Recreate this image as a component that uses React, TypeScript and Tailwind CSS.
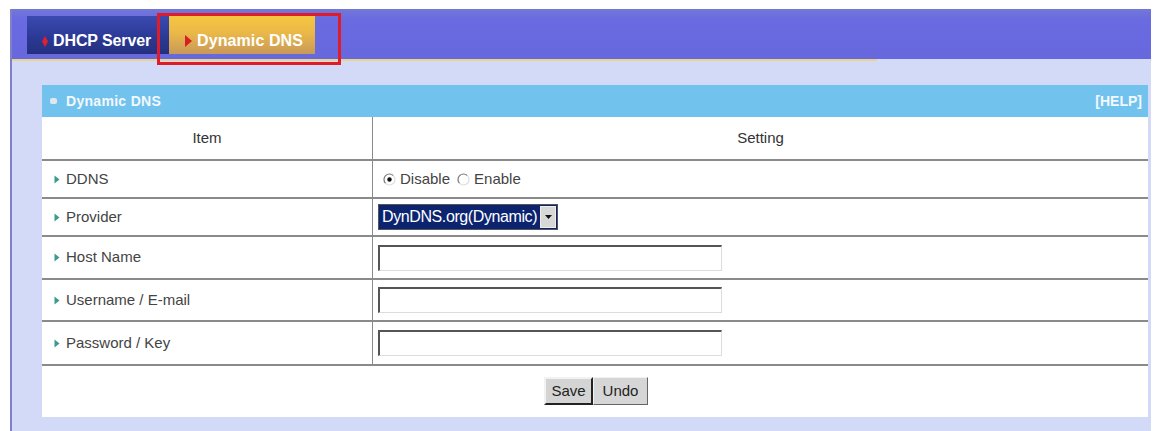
import React from "react"

const rows = ["DDNS", "Provider", "Host Name", "Username / E-mail", "Password / Key"]
const rowH = ["h-[38px]", "h-[38px]", "h-[43px]", "h-[42px]", "h-[44px]"]

function Bullet() {
  return (
    <svg width="6" height="9" viewBox="0 0 6 9" className="mr-[6px] shrink-0">
      <path d="M0.5 0.5 L5.5 4.5 L0.5 8.5 Z" fill="#3c9a8e" />
    </svg>
  )
}

function Radio({ checked }: { checked?: boolean }) {
  return (
    <svg width="13" height="13" viewBox="0 0 13 13" className="shrink-0">
      <circle cx="6.5" cy="6.5" r="5.5" fill="#fff" />
      <path d="M2.6 10.4 A5.5 5.5 0 0 1 10.4 2.6" stroke="#777" strokeWidth="1.2" fill="none" />
      <path d="M10.4 2.6 A5.5 5.5 0 0 1 2.6 10.4" stroke="#ddd" strokeWidth="1.2" fill="none" />
      {checked && <circle cx="6.5" cy="6.5" r="2.2" fill="#111" />}
    </svg>
  )
}

function TextBox() {
  return (
    <div className="w-[344px] h-[26px] bg-white border-t-2 border-l-2 border-b border-r border-t-[#555] border-l-[#555] border-b-[#ddd] border-r-[#ddd]" />
  )
}

export default function App() {
  return (
    <div className="w-[1153px] h-[431px] bg-white pt-[9px] pl-[10px] overflow-hidden font-['Liberation_Sans',Arial,sans-serif]">
      <div className="relative w-[1141px] h-[422px] border-l-2 border-[#7f80c8] bg-[#d3daf8] flex flex-col">
        {/* tab band */}
        <div className="h-[50px] bg-[linear-gradient(#7477d8,#6a6be0_20%,#6868de)] flex items-end pl-[15px] shrink-0">
          <div className="flex h-[38px] mb-[5px]">
            <div className="w-[142px] h-full bg-[linear-gradient(#3a4ab0,#2a3894_60%,#24307e)] flex items-center pl-[15px] pt-[12px] text-white font-bold text-[16px] tracking-[-0.1px]">
              <svg width="6" height="11" viewBox="0 0 6 11" className="mr-[5px]">
                <path d="M3 0 L6 5.5 L3 11 L0 5.5 Z" fill="#e0202a" />
              </svg>
              DHCP Server
            </div>
            <div className="w-[146px] h-full bg-[linear-gradient(#f7c640,#eab848_45%,#c8985a)] flex items-center pl-[16px] pt-[12px] text-white font-bold text-[16px] tracking-[0.1px]">
              <svg width="7" height="12" viewBox="0 0 7 12" className="mr-[5px]">
                <path d="M0 0 L7 6 L0 12 Z" fill="#d81e20" />
              </svg>
              Dynamic DNS
            </div>
          </div>
        </div>
        <div className="h-[2px] w-[865px] bg-[#e8d48a] shrink-0" />

        {/* red annotation box */}
        <div className="absolute left-[145px] top-[4px] w-[184px] h-[52px] border-[3px] border-[#e01c2a]" />

        {/* panel */}
        <div className="ml-[30px] mt-[24px] w-[1106px] h-[332px] bg-white flex flex-col">
          <div className="h-[32px] bg-[#72c2ee] flex items-center justify-between px-[8px] text-[#f2f8ff] text-[14px] font-bold shrink-0">
            <div className="flex items-center tracking-[0.3px]">
              <div className="w-[7px] h-[6px] rounded-[2px] bg-[#dfe8ee] mr-[9px]" />
              Dynamic DNS
            </div>
            <span className="mr-[-2px]">[HELP]</span>
          </div>

          <div className="grid grid-cols-[331px_1fr] text-[15px] text-[#444]">
            <div className="h-[44px] flex items-center justify-center border-r border-b-2 border-[#8a8a8a] text-[#333]">Item</div>
            <div className="h-[44px] flex items-center justify-center border-b-2 border-[#8a8a8a] text-[#333]">Setting</div>

            {rows.map((r, i) => (
              <React.Fragment key={r}>
                <div className={`flex items-center pl-[12px] border-r border-b-2 border-[#8a8a8a] ${rowH[i]}`}>
                  <Bullet />
                  {r}
                </div>
                <div className={`flex items-center pl-[5px] border-b-2 border-[#8a8a8a] ${rowH[i]}`}>
                  {i === 0 && (
                    <div className="flex items-center gap-[4px] pl-[5px]">
                      <Radio checked />
                      <span className="mr-[3px]">Disable</span>
                      <Radio />
                      <span>Enable</span>
                    </div>
                  )}
                  {i === 1 && (
                    <div className="flex items-center h-[26px] border border-[#555] bg-[#0c2470]">
                      <span className="px-[3px] text-white text-[16px] tracking-[-0.4px]">DynDNS.org(Dynamic)</span>
                      <div className="w-[16px] h-[22px] mr-[1px] bg-[#d8d8d8] border border-[#eee] flex items-center justify-center">
                        <svg width="7" height="4" viewBox="0 0 7 4">
                          <path d="M0 0 L7 0 L3.5 4 Z" fill="#111" />
                        </svg>
                      </div>
                    </div>
                  )}
                  {i >= 2 && <TextBox />}
                </div>
              </React.Fragment>
            ))}
          </div>

          <div className="flex justify-center pt-[11px] pl-[2px]">
            <button className="w-[49px] h-[28px] bg-[#d4d4d4] border-2 border-t-[#f2f2f2] border-l-[#f2f2f2] border-b-[#222] border-r-[#222] text-[15px] text-[#222]">
              Save
            </button>
            <button className="w-[55px] h-[28px] bg-[#d6d6d6] border border-t-[#f2f2f2] border-l-[#f2f2f2] border-b-[#666] border-r-[#666] text-[15px] text-[#222]">
              Undo
            </button>
          </div>
        </div>
      </div>
    </div>
  )
}
